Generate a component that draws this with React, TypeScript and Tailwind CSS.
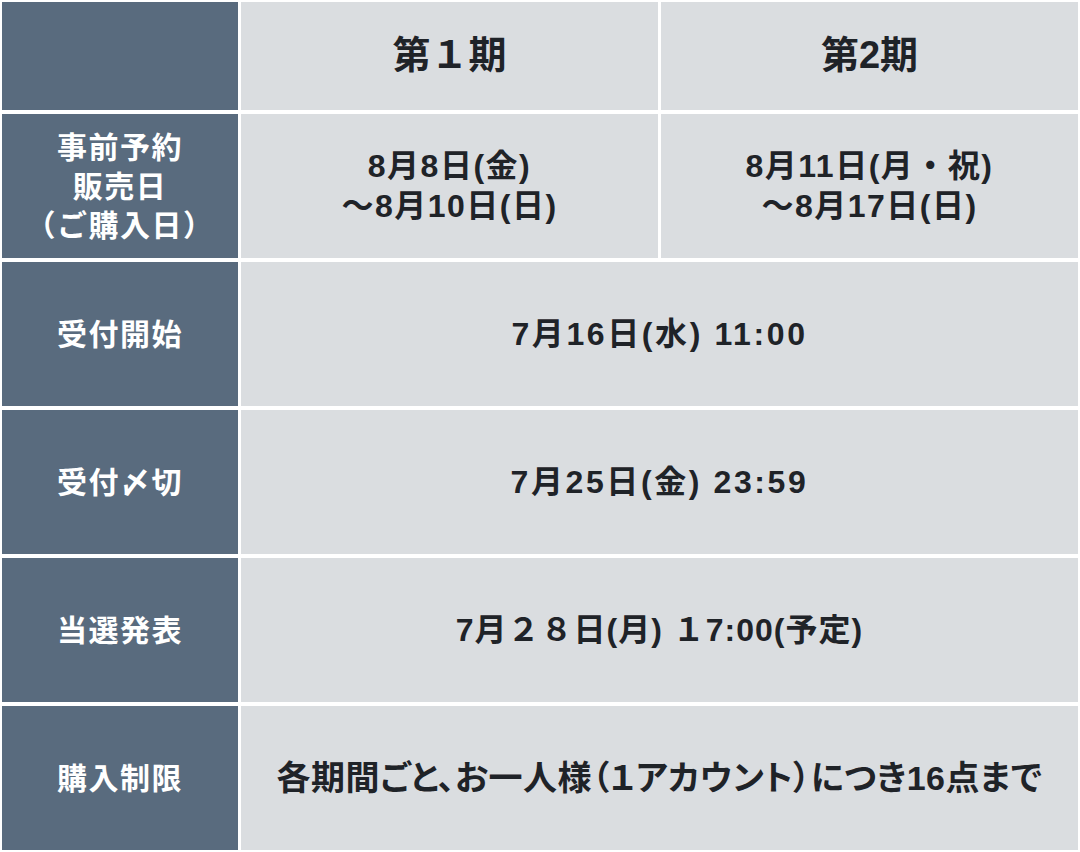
import React from 'react';

const font = { fontFamily: '"Liberation Sans", "Noto Sans CJK JP", "Noto Sans", sans-serif' };

const Label: React.FC<{ children: React.ReactNode }> = ({ children }) => (
    <div className="bg-[#596b7e] flex items-center justify-center text-center text-white font-bold text-[30px] leading-[39px] tracking-[1.5px]">
        <div>{children}</div>
    </div>
);

const Cell: React.FC<{ children: React.ReactNode; span?: boolean }> = ({ children, span }) => (
    <div
        className={`bg-[#dadde0] flex items-center justify-center text-center text-[#1f2328] font-bold text-[32px] leading-[40px] tracking-[1.5px] ${span ? 'col-span-2' : ''}`}
    >
        <div>{children}</div>
    </div>
);

export default function App() {
    return (
        <div className="bg-white w-[1080px] h-[852px] p-[2px]" style={font}>
            <div className="grid grid-cols-[236px_1fr_1fr] grid-rows-[108px_144px_144px_144px_144px_144px] gap-x-[3px] gap-y-[4px] h-full">
                <div className="bg-[#596b7e]" />
                <Cell>
                    <span className="text-[38px] tracking-normal">第１期</span>
                </Cell>
                <Cell>
                    <span className="text-[38px] tracking-normal">第2期</span>
                </Cell>

                <Label>
                    事前予約
                    <br />
                    販売日
                    <br />
                    （ご購入日）
                </Label>
                <Cell>
                    8月8日(金)
                    <br />
                    〜8月10日(日)
                </Cell>
                <Cell>
                    8月11日(月・祝)
                    <br />
                    〜8月17日(日)
                </Cell>

                <Label>受付開始</Label>
                <Cell span>
                    <span className="tracking-[2.6px]">7月16日(水) 11:00</span>
                </Cell>

                <Label>受付〆切</Label>
                <Cell span>
                    <span className="tracking-[2.6px]">7月25日(金) 23:59</span>
                </Cell>

                <Label>当選発表</Label>
                <Cell span>
                    <span className="tracking-[1px]">7月２８日(月) １7:00(予定)</span>
                </Cell>

                <Label>購入制限</Label>
                <Cell span>
                    <span className="inline-block text-[34px] tracking-[0.5px] [font-feature-settings:'palt']">
                        各期間ごと、お一人様（１アカウント）につき16点まで
                    </span>
                </Cell>
            </div>
        </div>
    );
}
